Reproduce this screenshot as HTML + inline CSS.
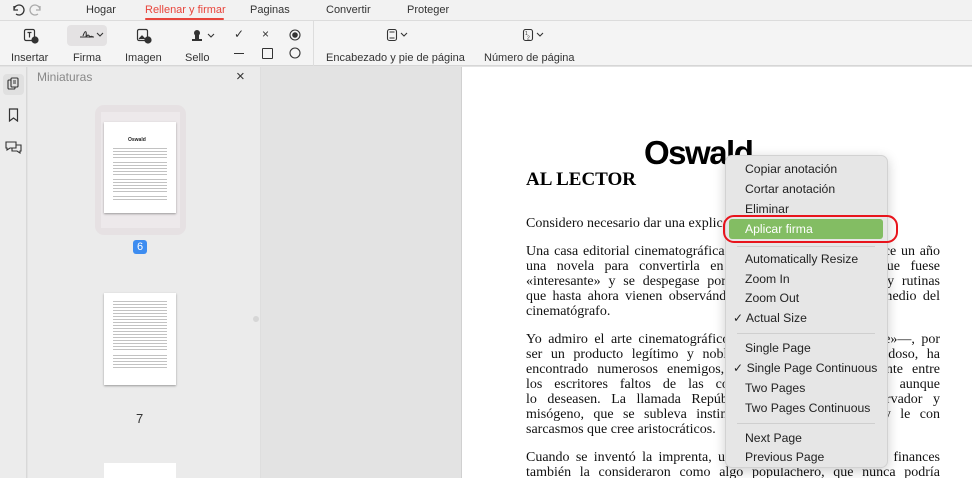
<!DOCTYPE html>
<html><head><meta charset="utf-8"><style>
*{margin:0;padding:0;box-sizing:border-box}
html,body{width:972px;height:478px;overflow:hidden}
body{position:relative;background:#e3e3e3;font-family:"Liberation Sans",sans-serif;color:#222}
.a{position:absolute}
.tab{position:absolute;top:4px;font-size:11px;color:#333}
.lbl{position:absolute;top:52px;font-size:11px;color:#333;white-space:nowrap}
.ser{font-family:"Liberation Serif",serif;font-size:14px;color:#111}
.ln{position:absolute;left:526px;width:414px;white-space:nowrap;overflow:hidden;line-height:15px;text-align:justify;text-align-last:justify}
.ln.l{text-align-last:left}
.mi{position:absolute;left:745px;font-size:12.2px;color:#222;white-space:nowrap}
.sep{position:absolute;left:737px;width:138px;height:1px;background:#cfcfcf}
.tl{background:repeating-linear-gradient(#777 0 1px,transparent 1px 3px);opacity:.45}
</style></head><body>
<div class="a" style="left:0;top:0;width:972px;height:21px;background:#f2f2f2;border-bottom:1px solid #dcdcdc"></div>
<div class="a" style="left:0;top:21px;width:972px;height:45px;background:#f4f4f4;border-bottom:1px solid #d6d6d6"></div>
<svg class="a" style="left:10px;top:3px" width="34" height="14" viewBox="0 0 34 14" fill="none" stroke="#333" stroke-width="1.3"><path d="M4 3v4h4M4 7a5 5 0 1 1 2 4"/><path stroke="#aaa" d="M34 3v4h-4M34 7a5 5 0 1 0-2 4" transform="translate(-4 0)"/></svg>
<div class="tab" style="left:86px">Hogar</div>
<div class="tab" style="left:145px;color:#e8453c">Rellenar y firmar</div>
<div class="a" style="left:145px;top:18px;width:79px;height:2px;background:#e8453c;border-radius:1px"></div>
<div class="tab" style="left:250px">Paginas</div>
<div class="tab" style="left:326px">Convertir</div>
<div class="tab" style="left:407px">Proteger</div>
<svg class="a" style="left:23px;top:28px" width="16" height="16" viewBox="0 0 16 16" fill="none" stroke="#333" stroke-width="1.2"><rect x="1.5" y="1.5" width="10" height="11" rx="1.5"/><path d="M4.5 4.5h4M6.5 4.5v5"/><circle cx="12" cy="12" r="3" fill="#333"/></svg>
<div class="a" style="left:67px;top:25px;width:40px;height:21px;background:#e4e2e3;border-radius:4px"></div>
<svg class="a" style="left:79px;top:29px" width="26" height="12" viewBox="0 0 26 12" fill="none" stroke="#333" stroke-width="1.1"><path d="M1 8h14M4 7c2-6 4-6 3 1 2-3 3-2 4 0 1-1 2-1 3 0M18 4l3 3 3-3"/></svg>
<svg class="a" style="left:136px;top:28px" width="16" height="16" viewBox="0 0 16 16" fill="none" stroke="#333" stroke-width="1.2"><rect x="1.5" y="1.5" width="10" height="11" rx="1.5"/><path d="M3 11l3-3 3 3" fill="#333"/><circle cx="12" cy="12" r="3" fill="#333"/></svg>
<svg class="a" style="left:190px;top:29px" width="26" height="14" viewBox="0 0 26 14" fill="#333"><circle cx="7" cy="4" r="3"/><rect x="5" y="6" width="4" height="4"/><rect x="2" y="10" width="10" height="2"/><path d="M18 5l3 3 3-3" fill="none" stroke="#333" stroke-width="1.1"/></svg>
<div class="a" style="left:234px;top:27px;font-size:12px;color:#333">✓</div>
<div class="a" style="left:262px;top:27px;font-size:12px;color:#333">×</div>
<svg class="a" style="left:289px;top:29px" width="12" height="12"><circle cx="6" cy="6" r="5" fill="none" stroke="#333" stroke-width="1.1"/><circle cx="6" cy="6" r="2.8" fill="#333"/></svg>
<div class="a" style="left:234px;top:53px;width:10px;height:1px;background:#333"></div>
<div class="a" style="left:262px;top:48px;width:11px;height:11px;border:1.1px solid #333;border-radius:1px"></div>
<svg class="a" style="left:289px;top:47px" width="12" height="12"><circle cx="6" cy="6" r="5" fill="none" stroke="#333" stroke-width="1.1"/></svg>
<div class="a" style="left:313px;top:21px;width:1px;height:45px;background:#ddd"></div>
<svg class="a" style="left:386px;top:28px" width="22" height="14" viewBox="0 0 22 14" fill="none" stroke="#333" stroke-width="1.1"><rect x="1.5" y="1.5" width="9" height="11" rx="2"/><path d="M3.5 4h5M3.5 10h5M15 5l3 3 3-3"/></svg>
<svg class="a" style="left:522px;top:28px" width="24" height="14" viewBox="0 0 24 14" fill="none" stroke="#333" stroke-width="1.1"><rect x="1.5" y="1.5" width="9" height="11" rx="2"/><text x="3" y="7" font-size="5" fill="#333" stroke="none">1</text><text x="5" y="11.5" font-size="5" fill="#333" stroke="none">2</text><path d="M15 5l3 3 3-3"/></svg>
<div class="lbl" style="left:11px">Insertar</div>
<div class="lbl" style="left:73px">Firma</div>
<div class="lbl" style="left:125px">Imagen</div>
<div class="lbl" style="left:185px">Sello</div>
<div class="lbl" style="left:326px">Encabezado y pie de página</div>
<div class="lbl" style="left:484px">Número de página</div>
<div class="a" style="left:0;top:67px;width:27px;height:411px;background:#ececec;border-right:1px solid #d8d8d8"></div>
<div class="a" style="left:3px;top:74px;width:21px;height:21px;background:#e0e0e0;border-radius:4px"></div>
<svg class="a" style="left:6px;top:77px" width="15" height="15" viewBox="0 0 15 15" fill="none" stroke="#333" stroke-width="1.1"><rect x="2" y="3" width="7" height="9" rx="1"/><rect x="5" y="1" width="7" height="9" rx="1" fill="#e0e0e0"/><path d="M7 4h3M7 6h3"/></svg>
<svg class="a" style="left:8px;top:108px" width="11" height="14" viewBox="0 0 11 14" fill="none" stroke="#333" stroke-width="1.2"><path d="M1.5 1h8v12l-4-3-4 3z"/></svg>
<svg class="a" style="left:5px;top:140px" width="17" height="14" viewBox="0 0 17 14" fill="none" stroke="#333" stroke-width="1.1"><path d="M1 2h10v6H5l-3 2V8H1z"/><path d="M11 5h5v6h-1v2l-3-2H7V8"/></svg>
<div class="a" style="left:28px;top:67px;width:232px;height:411px;background:#ebebeb"></div>
<div class="a" style="left:37px;top:70px;font-size:12px;color:#888">Miniaturas</div>
<div class="a" style="left:236px;top:68px;font-size:15px;color:#333">×</div>
<div class="a" style="left:95px;top:105px;width:91px;height:130px;background:#e6e1e3;border-radius:9px"></div>
<div class="a" style="left:101px;top:112px;width:79px;height:116px;background:#ede9eb"></div>
<div class="a" style="left:104px;top:122px;width:72px;height:91px;background:#fff;box-shadow:0 1px 2px rgba(0,0,0,.35)"></div>
<div class="a" style="left:128px;top:137px;font-size:5px;font-weight:bold">Oswald</div>
<div class="a tl" style="left:113px;top:148px;width:54px;height:10px"></div>
<div class="a tl" style="left:113px;top:162px;width:54px;height:14px"></div>
<div class="a tl" style="left:113px;top:179px;width:54px;height:14px"></div>
<div class="a tl" style="left:113px;top:196px;width:54px;height:6px"></div>
<div class="a" style="left:133px;top:240px;width:14px;height:14px;background:#3d8cf0;border-radius:3px;color:#fff;font-size:11px;text-align:center;line-height:14px">6</div>
<div class="a" style="left:104px;top:293px;width:72px;height:92px;background:#fff;box-shadow:0 1px 2px rgba(0,0,0,.35)"></div>
<div class="a tl" style="left:113px;top:301px;width:54px;height:50px"></div>
<div class="a tl" style="left:113px;top:355px;width:54px;height:14px"></div>
<div class="a" style="left:136px;top:411px;font-size:13px;color:#333">7</div>
<div class="a" style="left:104px;top:463px;width:72px;height:15px;background:#fff"></div>
<div class="a" style="left:253px;top:316px;width:6px;height:6px;border-radius:3px;background:#d6d6d6"></div>
<div class="a" style="left:260px;top:67px;width:1px;height:411px;background:#dedede"></div>
<div class="a" style="left:461px;top:67px;width:511px;height:411px;background:#fff;border-left:1px solid #d0d0d0"></div>
<div class="a" style="left:644px;top:134px;font-size:33px;font-weight:bold;letter-spacing:-1.5px;color:#000">Oswald</div>
<div class="a ser" style="left:526px;top:169px;font-size:19px;font-weight:bold;color:#000">AL LECTOR</div>
<div class="ser">
<div class="ln l" style="top:216px">Considero necesario dar una explicación previa sobre este libro.</div>
<div class="ln" style="top:244px">Una casa editorial cinematográfica de Hollywood me pidió hace un año</div>
<div class="ln" style="top:259px">una novela para convertirla en <i>film</i>, recomendándome que fuese</div>
<div class="ln" style="top:274px">«interesante» y se despegase por completo de las normas y rutinas</div>
<div class="ln" style="top:289px">que hasta ahora vienen observándose en la producción por medio del</div>
<div class="ln l" style="top:304px">cinematógrafo.</div>
<div class="ln" style="top:332px">Yo admiro el arte cinematográfico—llamado el «séptimo arte»—, por</div>
<div class="ln" style="top:347px">ser un producto legítimo y noble de nuestro tiempo novedoso, ha</div>
<div class="ln" style="top:362px">encontrado numerosos enemigos, que abundan principalmente entre</div>
<div class="ln" style="top:377px">los escritores faltos de las condiciones para cultivarlo, aunque</div>
<div class="ln" style="top:392px">lo deseasen. La llamada República de las Letras conservador y</div>
<div class="ln" style="top:407px">misógeno, que se subleva instintivamente a la novedad y le con</div>
<div class="ln l" style="top:422px">sarcasmos que cree aristocráticos.</div>
<div class="ln" style="top:450px">Cuando se inventó la imprenta, una gran parte de las gentes finances</div>
<div class="ln" style="top:465px">también la consideraron como algo populachero, que nunca podría</div>
</div>
<div class="a" style="left:725px;top:155px;width:163px;height:313px;background:#e6e6e6;border:1px solid #d2d2d2;border-radius:7px;box-shadow:0 3px 12px rgba(0,0,0,.2)"></div>
<div class="mi" style="top:162px">Copiar anotación</div>
<div class="mi" style="top:182px">Cortar anotación</div>
<div class="mi" style="top:202px">Eliminar</div>
<div class="a" style="left:729px;top:219px;width:154px;height:20px;background:#83bd63;border-radius:3px"></div>
<div class="mi" style="top:222px;color:#fff">Aplicar firma</div>
<div class="a" style="left:723px;top:215px;width:175px;height:28px;border:2.5px solid #e8141c;border-radius:11px"></div>
<div class="sep" style="top:246px"></div>
<div class="mi" style="top:252px">Automatically Resize</div>
<div class="mi" style="top:272px">Zoom In</div>
<div class="mi" style="top:291px">Zoom Out</div>
<div class="mi" style="top:311px;left:733px">✓ Actual Size</div>
<div class="sep" style="top:333px"></div>
<div class="mi" style="top:341px">Single Page</div>
<div class="mi" style="top:361px;left:733px">✓ Single Page Continuous</div>
<div class="mi" style="top:381px">Two Pages</div>
<div class="mi" style="top:401px">Two Pages Continuous</div>
<div class="sep" style="top:423px"></div>
<div class="mi" style="top:431px">Next Page</div>
<div class="mi" style="top:450px">Previous Page</div>
</body></html>
